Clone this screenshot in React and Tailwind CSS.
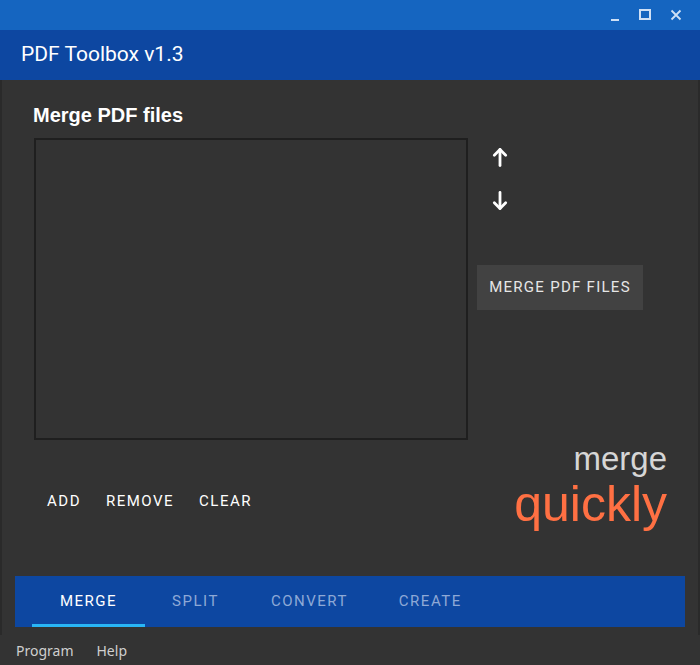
import React from "react";

const roboto = { fontFamily: "Roboto, 'Noto Sans', sans-serif" };

function ArrowUp() {
  return (
    <svg width="16" height="20" viewBox="0 0 16 20" fill="none" stroke="white" strokeWidth="2.8" strokeLinecap="round" strokeLinejoin="round">
      <path d="M8 18.5V2.5" />
      <path d="M2.3 8.2L8 2.5L13.7 8.2" />
    </svg>
  );
}
function ArrowDown() {
  return (
    <svg width="16" height="20" viewBox="0 0 16 20" fill="none" stroke="white" strokeWidth="2.8" strokeLinecap="round" strokeLinejoin="round">
      <path d="M8 1.5v16" />
      <path d="M2.3 11.8L8 17.5L13.7 11.8" />
    </svg>
  );
}

const tabs = [
  { t: "MERGE", a: true, cls: "px-[28px]" },
  { t: "SPLIT", a: false, cls: "px-[27px]" },
  { t: "CONVERT", a: false, cls: "px-[25px]" },
  { t: "CREATE", a: false, cls: "px-[26px]" },
];

export default function App() {
  return (
    <div className="w-[700px] h-[665px] flex flex-col bg-[#333333] overflow-hidden">
      {/* title bar */}
      <div className="h-[30px] bg-[#1565c0] flex items-center justify-end pr-[18px] gap-[19px] shrink-0">
        <svg width="10" height="14" viewBox="0 0 10 14"><rect x="1" y="11" width="8" height="2" fill="#cfe0f5" /></svg>
        <svg width="12" height="12" viewBox="0 0 12 12"><rect x="1" y="1" width="10" height="9" fill="none" stroke="#cfe0f5" strokeWidth="2" /></svg>
        <svg width="12" height="12" viewBox="0 0 12 12"><path d="M1.5 1.5l9 9M10.5 1.5l-9 9" stroke="#cfe0f5" strokeWidth="1.8" /></svg>
      </div>
      {/* header */}
      <div className="h-[50px] bg-[#0d47a1] flex items-center pl-[21px] shrink-0">
        <span className="text-white text-[21px]" style={roboto}>PDF Toolbox v1.3</span>
      </div>
      {/* main */}
      <div className="flex-1 flex flex-col border-l-2 border-r-2 border-[#2a2a2a]">
        <div className="flex pt-[25px]">
          <div className="pl-[31px]">
            <div className="text-[20px] font-bold text-white leading-[20px]" style={{ fontFamily: "'Liberation Sans', Arial, sans-serif" }}>Merge PDF files</div>
            <div className="mt-[13px] w-[434px] h-[302px] border-2 border-[#1f1f1f] bg-[#333333]" style={{ marginLeft: 1 }} />
          </div>
          <div className="flex flex-col pt-[42px] pl-[9px]">
            <div className="flex flex-col items-start pl-[15px] gap-[24px]">
              <ArrowUp />
              <ArrowDown />
            </div>
            <div className="mt-[54px] h-[45px] w-[166px] bg-[#424242] flex items-center justify-center text-[15px] text-[#e6e6e6] tracking-[0.085em]" style={roboto}>
              MERGE PDF FILES
            </div>
          </div>
        </div>
        <div className="flex justify-between items-end pl-[45px] pr-[31px] mt-[0px]">
          <div className="flex gap-[25px] text-[15px] text-white tracking-[0.1em] pb-[18px]" style={roboto}>
            <span>ADD</span>
            <span>REMOVE</span>
            <span>CLEAR</span>
          </div>
          <div className="flex flex-col items-end" style={{ fontFamily: "'Liberation Sans', Arial, sans-serif" }}>
            <span className="text-[33px] leading-[38px] text-[#d6d6d6]">merge</span>
            <span className="text-[50px] leading-[52px] text-[#ff7043]">quickly</span>
          </div>
        </div>
        <div className="mt-[46px] mx-[13px] h-[51px] bg-[#0d47a1] flex pl-[17px]" style={roboto}>
          {tabs.map(({ t, a, cls }) => (
            <div key={t} className={"relative h-full flex items-center text-[15px] tracking-[0.1em] " + cls + " " + (a ? "text-white" : "text-[#8ea9d6]")}>
              {t}
              {a && <div className="absolute left-0 right-0 bottom-0 h-[3px] bg-[#29b6f6]" />}
            </div>
          ))}
        </div>
        <div className="flex-1" />
      </div>
      {/* menu */}
      <div className="h-[30px] flex items-center pl-[16px] gap-[23px] text-[14px] text-[#cfcfcf] shrink-0" style={{ fontFamily: "'Noto Sans', 'Open Sans', sans-serif" }}>
        <span>Program</span>
        <span>Help</span>
      </div>
    </div>
  );
}
